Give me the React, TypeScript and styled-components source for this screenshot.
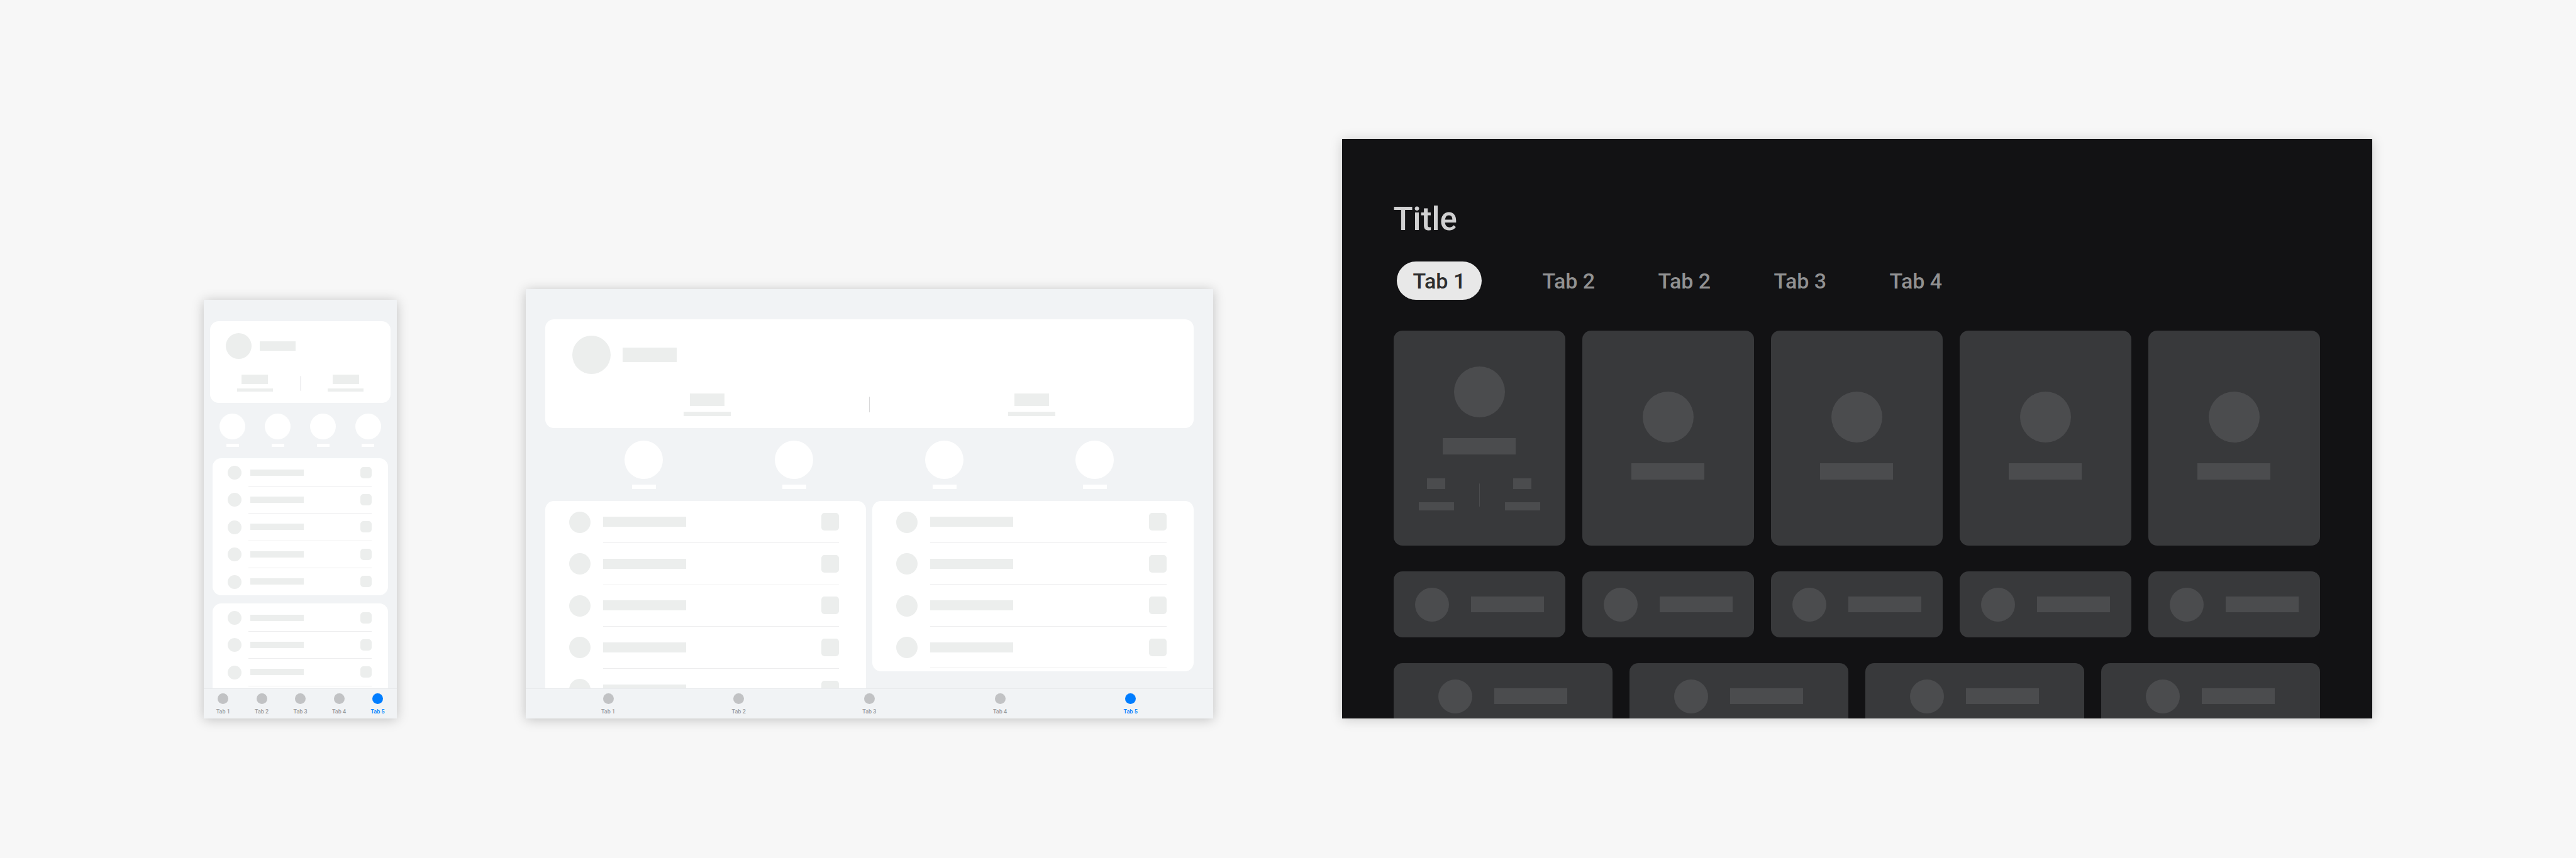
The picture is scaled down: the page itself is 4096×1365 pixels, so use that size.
import React from "react";
import styled, { createGlobalStyle } from "styled-components";

const GlobalStyle = createGlobalStyle`
  *, *::before, *::after { box-sizing: border-box; }
  body {
    margin: 0;
    background: #f7f7f7;
    font-family: Roboto, "Noto Sans", sans-serif;
  }
  button {
    margin: 0;
    padding: 0;
    border: 0;
    background: none;
    font: inherit;
    cursor: pointer;
  }
`;

const light = { surface: "#f1f3f5", card: "#ffffff", bone: "#eceeed" };
const dark = { surface: "#121214", card: "#38393b", bone: "#4b4c4e" };

/* ---------- Shared parts ---------- */

const Page = styled.main`
  display: flex;
  align-items: flex-end;
  gap: 205px;
  min-height: 100vh;
  padding: 0 324px 222px;
`;

const Screen = styled.section<{ $w: number; $h: number; $dark?: boolean }>`
  display: flex;
  flex-direction: column;
  flex: ${(p) => p.$w} 1 0;
  min-width: 0;
  aspect-ratio: ${(p) => p.$w} / ${(p) => p.$h};
  overflow: hidden;
  background: ${(p) => (p.$dark ? dark.surface : light.surface)};
  box-shadow: 0 2px 18px rgba(0, 0, 0, ${(p) => (p.$dark ? 0.18 : 0.22)});
`;

const Circle = styled.span<{ $size: number; $color?: string }>`
  flex: none;
  width: ${(p) => p.$size}px;
  height: ${(p) => p.$size}px;
  border-radius: 50%;
  background: ${(p) => p.$color ?? light.bone};
`;

const Bar = styled.span<{ $w: number; $h: number; $color?: string; $radius?: number }>`
  flex: none;
  width: ${(p) => p.$w}px;
  height: ${(p) => p.$h}px;
  border-radius: ${(p) => p.$radius ?? 0}px;
  background: ${(p) => p.$color ?? light.bone};
`;

const StatRow = styled.div`
  display: flex;
  justify-content: center;
  align-self: stretch;
`;

const Stat = styled.div<{ $gap: number }>`
  display: flex;
  flex: 1;
  flex-direction: column;
  align-items: center;
  gap: ${(p) => p.$gap}px;
`;

const StatDivider = styled.span<{ $w: number; $h: number; $top: number; $color: string }>`
  width: ${(p) => p.$w}px;
  height: ${(p) => p.$h}px;
  margin-top: ${(p) => p.$top}px;
  border-radius: 1px;
  background: ${(p) => p.$color};
`;

/* ---------- Phone and tablet ---------- */

type Metrics = {
  inset: number;
  top: number;
  card: { height: number; padTop: number; padLeft: number; gap: number; statsTop: number };
  avatar: number;
  name: [number, number];
  stat: { value: [number, number]; label: [number, number]; gap: number };
  divider: { w: number; h: number; top: number; color: string };
  quick: { inset: number; top: number; gap: number; label: [number, number]; bottom: number };
  row: {
    avatar: number;
    bar: [number, number];
    square: number;
    left: number;
    right: number;
    gap: number;
    indent: number;
  };
  tabInset: number;
};

const phone: Metrics = {
  inset: 10,
  top: 34,
  card: { height: 130, padTop: 19, padLeft: 25, gap: 13, statsTop: 25 },
  avatar: 41,
  name: [57, 15],
  stat: { value: [42, 15], label: [57, 5], gap: 7 },
  divider: { w: 2, h: 24, top: 2, color: "#f1f1f2" },
  quick: { inset: 10, top: 17, gap: 7, label: [20, 5], bottom: 18 },
  row: { avatar: 22, bar: [85, 10], square: 18, left: 24, right: 26, gap: 11, indent: 3 },
  tabInset: 0,
};

const tablet: Metrics = {
  inset: 31,
  top: 48,
  card: { height: 173, padTop: 26, padLeft: 43, gap: 19, statsTop: 31 },
  avatar: 61,
  name: [86, 23],
  stat: { value: [55, 20], label: [75, 7], gap: 9 },
  divider: { w: 1, h: 25, top: 5, color: "#d8d8d9" },
  quick: { inset: 68, top: 20, gap: 9, label: [38, 7], bottom: 19 },
  row: { avatar: 34, bar: [132, 16], square: 28, left: 38, right: 43, gap: 20, indent: 0 },
  tabInset: 27,
};

const Scroll = styled.div<{ $top: number }>`
  flex: 1;
  min-height: 0;
  overflow: hidden;
  padding-top: ${(p) => p.$top}px;
`;

const ProfileCard = styled.article<{ $m: Metrics }>`
  min-height: ${(p) => p.$m.card.height}px;
  margin: 0 ${(p) => p.$m.inset}px;
  padding-top: ${(p) => p.$m.card.padTop}px;
  border-radius: 14px;
  background: ${light.card};
`;

const ProfileHead = styled.div<{ $m: Metrics }>`
  display: flex;
  align-items: center;
  gap: ${(p) => p.$m.card.gap}px;
  padding-left: ${(p) => p.$m.card.padLeft}px;
  margin-bottom: ${(p) => p.$m.card.statsTop}px;
`;

const QuickRow = styled.div<{ $m: Metrics }>`
  display: grid;
  grid-template-columns: repeat(4, 1fr);
  padding: ${(p) => p.$m.quick.top}px ${(p) => p.$m.quick.inset}px ${(p) => p.$m.quick.bottom}px;
`;

const QuickItem = styled.div<{ $gap: number }>`
  display: flex;
  flex-direction: column;
  align-items: center;
  gap: ${(p) => p.$gap}px;
`;

const Lists = styled.div<{ $columns: number; $inset: number; $gap: number }>`
  display: grid;
  grid-template-columns: repeat(${(p) => p.$columns}, 1fr);
  align-items: start;
  gap: ${(p) => p.$gap}px;
  padding: 0 ${(p) => p.$inset}px;
`;

const ListCard = styled.ul<{ $m: Metrics; $height: number; $top: number; $bottom: number }>`
  display: grid;
  grid-auto-rows: 1fr;
  min-height: ${(p) => p.$height}px;
  margin: 0;
  padding: ${(p) => p.$top}px ${(p) => p.$m.row.right}px ${(p) => p.$bottom}px
    ${(p) => p.$m.row.left}px;
  list-style: none;
  border-radius: 14px;
  background: ${light.card};
`;

const ListRow = styled.li<{ $gap: number }>`
  display: flex;
  align-items: center;
  gap: ${(p) => p.$gap}px;
`;

const RowBody = styled.div<{ $indent: number; $line: boolean }>`
  display: flex;
  flex: 1;
  align-self: stretch;
  align-items: center;
  justify-content: space-between;
  padding-left: ${(p) => p.$indent}px;
  border-bottom: 1px solid ${(p) => (p.$line ? "#ededee" : "transparent")};
`;

const TabBar = styled.nav<{ $inset: number }>`
  display: grid;
  grid-template-columns: repeat(5, 1fr);
  flex: none;
  height: 48px;
  padding: 0 ${(p) => p.$inset}px;
  border-top: 1px solid #e9ebed;
`;

const TabBarItem = styled.button<{ $active: boolean }>`
  display: flex;
  flex-direction: column;
  align-items: center;
  gap: 6px;
  padding-top: 7px;
  font-size: 9px;
  font-weight: 500;
  line-height: 12px;
  color: ${(p) => (p.$active ? "#007dff" : "#9b9c9e")};
`;

function List(props: {
  m: Metrics;
  rows: number;
  height: number;
  top?: number;
  bottom?: number;
  lastLine?: boolean;
}) {
  const { m, rows, height, top = 0, bottom = 0, lastLine = false } = props;
  return (
    <ListCard $m={m} $height={height} $top={top} $bottom={bottom}>
      {Array.from({ length: rows }, (_, i) => (
        <ListRow key={i} $gap={m.row.gap}>
          <Circle $size={m.row.avatar} />
          <RowBody $indent={m.row.indent} $line={lastLine || i < rows - 1}>
            <Bar $w={m.row.bar[0]} $h={m.row.bar[1]} />
            <Bar $w={m.row.square} $h={m.row.square} $radius={5} />
          </RowBody>
        </ListRow>
      ))}
    </ListCard>
  );
}

function ProfileTop({ m }: { m: Metrics }) {
  const stat = (
    <Stat $gap={m.stat.gap}>
      <Bar $w={m.stat.value[0]} $h={m.stat.value[1]} />
      <Bar $w={m.stat.label[0]} $h={m.stat.label[1]} />
    </Stat>
  );
  return (
    <>
      <ProfileCard $m={m}>
        <ProfileHead $m={m}>
          <Circle $size={m.avatar} />
          <Bar $w={m.name[0]} $h={m.name[1]} />
        </ProfileHead>
        <StatRow>
          {stat}
          <StatDivider
            $w={m.divider.w}
            $h={m.divider.h}
            $top={m.divider.top}
            $color={m.divider.color}
          />
          {stat}
        </StatRow>
      </ProfileCard>
      <QuickRow $m={m}>
        {[0, 1, 2, 3].map((i) => (
          <QuickItem key={i} $gap={m.quick.gap}>
            <Circle $size={m.avatar} $color={light.card} />
            <Bar $w={m.quick.label[0]} $h={m.quick.label[1]} $color={light.card} />
          </QuickItem>
        ))}
      </QuickRow>
    </>
  );
}

function BottomTabs({ inset }: { inset: number }) {
  return (
    <TabBar $inset={inset}>
      {["Tab 1", "Tab 2", "Tab 3", "Tab 4", "Tab 5"].map((label, i) => (
        <TabBarItem key={label} type="button" $active={i === 4}>
          <Circle $size={17} $color={i === 4 ? "#007dff" : "#c1c2c4"} />
          {label}
        </TabBarItem>
      ))}
    </TabBar>
  );
}

/* ---------- TV ---------- */

const TvBody = styled.div`
  display: flex;
  flex: 1;
  flex-direction: column;
  min-height: 0;
  overflow: hidden;
  padding: 98px 83px 0 82px;
`;

const TvTitle = styled.h1`
  margin: 0 0 37px;
  font-size: 51px;
  font-weight: 500;
  line-height: 60px;
  color: #d0d0d1;
`;

const TvTabs = styled.nav`
  display: flex;
  flex: none;
  gap: 92px;
  margin-bottom: 49px;
  padding-left: 5px;
`;

const TvTab = styled.button<{ $active: boolean }>`
  min-width: 92px;
  height: 61px;
  padding: 0 ${(p) => (p.$active ? 26 : 0)}px;
  border-radius: 31px;
  background: ${(p) => (p.$active ? "#e8e8e8" : "transparent")};
  font-size: 34px;
  font-weight: 500;
  line-height: 40px;
  color: ${(p) => (p.$active ? "#2c2d2e" : "#919192")};
`;

const TvGrid = styled.div<{ $columns: number }>`
  display: grid;
  grid-template-columns: repeat(${(p) => p.$columns}, 1fr);
  flex: none;
  gap: 27px;
  margin-bottom: 41px;
`;

const TvTallCard = styled.article<{ $top: number }>`
  display: flex;
  flex-direction: column;
  align-items: center;
  gap: 33px;
  min-height: 342px;
  padding-top: ${(p) => p.$top}px;
  border-radius: 14px;
  background: ${dark.card};
`;

const TvStats = styled(StatRow)`
  padding-top: 5px;
`;

const TvWideCard = styled.article`
  display: flex;
  align-items: center;
  justify-content: center;
  gap: 35px;
  height: 105px;
  border-radius: 14px;
  background: ${dark.card};
`;

const tvTabs = ["Tab 1", "Tab 2", "Tab 2", "Tab 3", "Tab 4"];

function TvStat() {
  return (
    <Stat $gap={21}>
      <Bar $w={29} $h={17} $color={dark.bone} />
      <Bar $w={56} $h={13} $color={dark.bone} />
    </Stat>
  );
}

function TvWideRow({ columns }: { columns: number }) {
  return (
    <TvGrid $columns={columns}>
      {Array.from({ length: columns }, (_, i) => (
        <TvWideCard key={i}>
          <Circle $size={54} $color={dark.bone} />
          <Bar $w={116} $h={25} $color={dark.bone} />
        </TvWideCard>
      ))}
    </TvGrid>
  );
}

export default function App() {
  return (
    <>
      <GlobalStyle />
      <Page>
        <Screen $w={360} $h={780}>
          <Scroll $top={phone.top}>
            <ProfileTop m={phone} />
            <Lists $columns={1} $inset={14} $gap={13}>
              <List m={phone} rows={5} height={218} top={1} />
              <List m={phone} rows={5} height={218} top={1} />
            </Lists>
          </Scroll>
          <BottomTabs inset={phone.tabInset} />
        </Screen>

        <Screen $w={1280} $h={800}>
          <Scroll $top={tablet.top}>
            <ProfileTop m={tablet} />
            <Lists $columns={2} $inset={31} $gap={10}>
              <List m={tablet} rows={5} height={333} />
              <List m={tablet} rows={4} height={271} bottom={5} lastLine />
            </Lists>
          </Scroll>
          <BottomTabs inset={tablet.tabInset} />
        </Screen>

        <Screen $w={1920} $h={1080} $dark>
          <TvBody>
            <TvTitle>Title</TvTitle>
            <TvTabs>
              {tvTabs.map((label, i) => (
                <TvTab key={i} type="button" $active={i === 0}>
                  {label}
                </TvTab>
              ))}
            </TvTabs>
            <TvGrid $columns={5}>
              {[0, 1, 2, 3, 4].map((i) => (
                <TvTallCard key={i} $top={i === 0 ? 57 : 97}>
                  <Circle $size={81} $color={dark.bone} />
                  <Bar $w={116} $h={26} $color={dark.bone} />
                  {i === 0 && (
                    <TvStats>
                      <TvStat />
                      <StatDivider $w={1} $h={37} $top={8} $color={dark.bone} />
                      <TvStat />
                    </TvStats>
                  )}
                </TvTallCard>
              ))}
            </TvGrid>
            <TvWideRow columns={5} />
            <TvWideRow columns={4} />
          </TvBody>
        </Screen>
      </Page>
    </>
  );
}
